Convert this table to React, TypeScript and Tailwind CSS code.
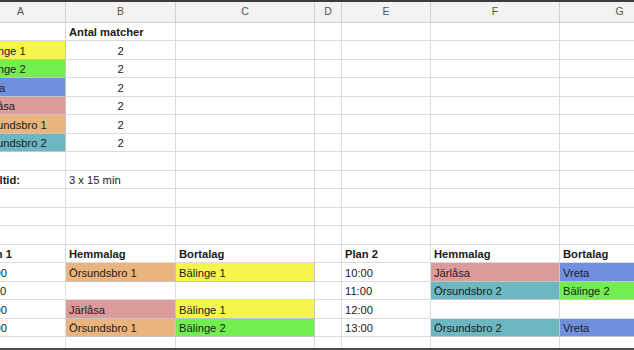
// App.tsx – spelschema i kalkylarksvy

import React from "react";

type Cell = {
  text?: string;
  bg?: string;
  bold?: boolean;
  center?: boolean;
};

const colBg: Record<string, string> = {
  yellow: "bg-[#f6f54c]",
  green: "bg-[#72ee50]",
  blue: "bg-[#7090de]",
  pink: "bg-[#dc9b9b]",
  orange: "bg-[#eab47e]",
  teal: "bg-[#6db7c3]",
};

const columns = ["A", "B", "C", "D", "E", "F", "G"];

// en rad = sju celler, A..G
const rows: Cell[][] = [
  [{}, { text: "Antal matcher", bold: true }, {}, {}, {}, {}, {}],
  [{ text: "Bälinge 1", bg: "yellow" }, { text: "2", center: true }, {}, {}, {}, {}, {}],
  [{ text: "Bälinge 2", bg: "green" }, { text: "2", center: true }, {}, {}, {}, {}, {}],
  [{ text: "Vreta", bg: "blue" }, { text: "2", center: true }, {}, {}, {}, {}, {}],
  [{ text: "Järlåsa", bg: "pink" }, { text: "2", center: true }, {}, {}, {}, {}, {}],
  [{ text: "Örsundsbro 1", bg: "orange" }, { text: "2", center: true }, {}, {}, {}, {}, {}],
  [{ text: "Örsundsbro 2", bg: "teal" }, { text: "2", center: true }, {}, {}, {}, {}, {}],
  [{}, {}, {}, {}, {}, {}, {}],
  [{ text: "Speltid:", bold: true }, { text: "3 x 15 min" }, {}, {}, {}, {}, {}],
  [{}, {}, {}, {}, {}, {}, {}],
  [{}, {}, {}, {}, {}, {}, {}],
  [{}, {}, {}, {}, {}, {}, {}],
  [
    { text: "Plan 1", bold: true },
    { text: "Hemmalag", bold: true },
    { text: "Bortalag", bold: true },
    {},
    { text: "Plan 2", bold: true },
    { text: "Hemmalag", bold: true },
    { text: "Bortalag", bold: true },
  ],
  [
    { text: "10:00" },
    { text: "Örsundsbro 1", bg: "orange" },
    { text: "Bälinge 1", bg: "yellow" },
    {},
    { text: "10:00" },
    { text: "Järlåsa", bg: "pink" },
    { text: "Vreta", bg: "blue" },
  ],
  [
    { text: "11:00" },
    {},
    {},
    {},
    { text: "11:00" },
    { text: "Örsundsbro 2", bg: "teal" },
    { text: "Bälinge 2", bg: "green" },
  ],
  [
    { text: "12:00" },
    { text: "Järlåsa", bg: "pink" },
    { text: "Bälinge 1", bg: "yellow" },
    {},
    { text: "12:00" },
    {},
    {},
  ],
  [
    { text: "13:00" },
    { text: "Örsundsbro 1", bg: "orange" },
    { text: "Bälinge 2", bg: "green" },
    {},
    { text: "13:00" },
    { text: "Örsundsbro 2", bg: "teal" },
    { text: "Vreta", bg: "blue" },
  ],
];

const gridCols = "grid grid-cols-[90px_110px_139px_27px_89px_129px_120px]";

export default function App() {
  return (
    <div
      className="h-[350px] w-[634px] overflow-hidden bg-white text-[#1b1b1b]"
      style={{ fontFamily: '"Liberation Sans", Arial, sans-serif' }}
    >
      <div className="h-[2px] bg-[#3c3c3c]" />
      <div className="-ml-[24px]">
        {/* kolumnrubriker */}
        <div className={gridCols}>
          {columns.map((c) => (
            <div
              key={c}
              className="flex h-[21px] items-center justify-center border-r border-b border-[#cfcfcf] bg-[#f2f2f2] text-[10.5px] text-[#555]"
            >
              {c}
            </div>
          ))}
        </div>

        {rows.map((row, i) => (
          <div key={i} className={gridCols}>
            {row.map((cell, j) => (
              <div
                key={j}
                className={`flex h-[18.47px] items-end overflow-hidden whitespace-nowrap border-r border-b px-[3px] pb-px text-[11.2px] leading-[13px] ${
                  cell.bg ? `${colBg[cell.bg]} border-[#c4c4c4]` : "border-[#dcdcdc]"
                } ${cell.bold ? "font-bold" : ""} ${cell.center ? "justify-center" : ""}`}
              >
                {cell.text}
              </div>
            ))}
          </div>
        ))}

        <div className={gridCols}>
          {columns.map((c) => (
            <div key={c} className="h-[11px] border-r border-[#dcdcdc]" />
          ))}
        </div>
      </div>
      <div className="h-[3px] bg-[#4a4a4a]" />
    </div>
  );
}
